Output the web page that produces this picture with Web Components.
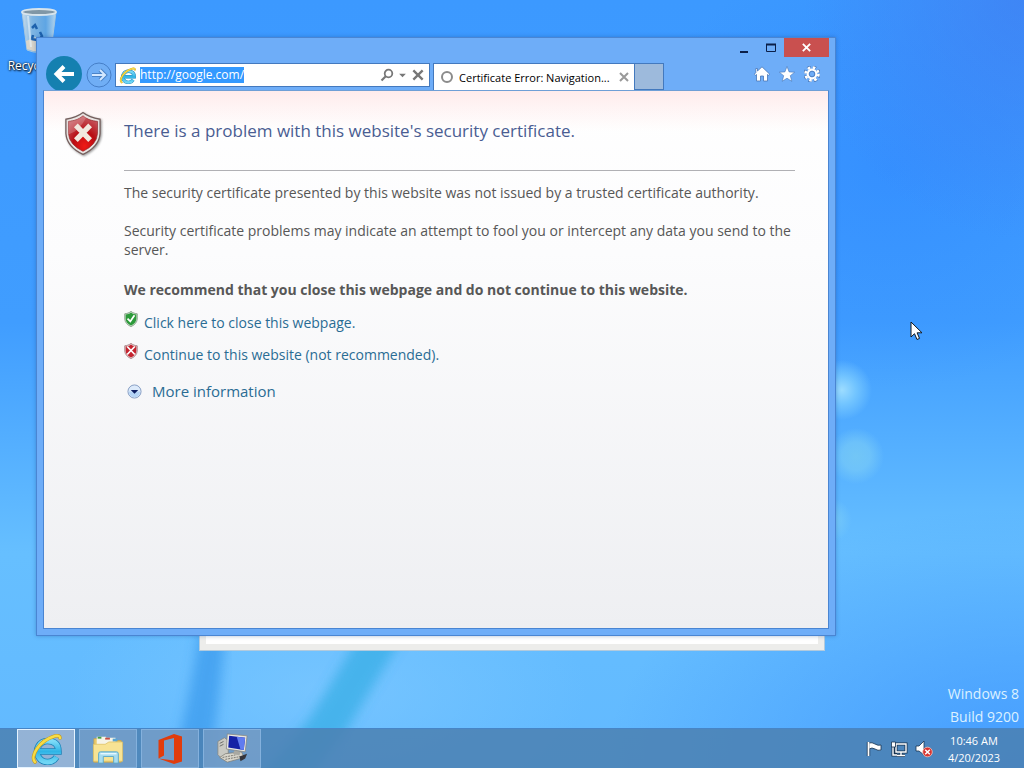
<!DOCTYPE html>
<html lang="en">
<head>
<meta charset="utf-8">
<title>Certificate Error: Navigation Blocked</title>
<style>
  html, body {
    margin: 0;
    height: 100%;
    overflow: hidden;
    font-family: "Open Sans", "Noto Sans", sans-serif;
    font-size: 12px;
  }
</style>
</head>
<body>
<desktop-screen>
  <desktop-icon slot="icons" name="bin" label="Recycle Bin"></desktop-icon>
  <back-window slot="windows"></back-window>
  <browser-window slot="windows" url="http://google.com/" tab="Certificate Error: Navigation...">
    <cert-error></cert-error>
  </browser-window>
  <task-bar slot="taskbar">
    <task-button icon="ie" label="Internet Explorer" active></task-button>
    <task-button icon="folder" label="File Explorer"></task-button>
    <task-button icon="office" label="Office"></task-button>
    <task-button icon="remote" label="Remote Desktop"></task-button>
    <tray-area slot="tray"></tray-area>
  </task-bar>
</desktop-screen>

<script>
const IE = `
  <defs>
    <linearGradient id="b" x1="0" y1="0" x2="0" y2="1"><stop offset="0" stop-color="#7fdcf8"/><stop offset=".5" stop-color="#2fb4e6"/><stop offset="1" stop-color="#6fd6f5"/></linearGradient>
  </defs>
  <path fill="none" stroke="#1d83b8" stroke-width="6.500" d="M8 18.500H28.500Q28.500 8 17.500 8A10.500 10.500 0 1 0 26.500 24"/>
  <path fill="none" stroke="url(#b)" stroke-width="5" d="M8 18.500H28.500Q28.500 8 17.500 8A10.500 10.500 0 1 0 26.500 24"/>
  <path fill="none" stroke="#c99c1c" stroke-width="3.600" stroke-linecap="round" d="M5 29C0 24 8 8 25 3Q30 2 30 5"/>
  <path fill="none" stroke="#f7dc45" stroke-width="2.400" stroke-linecap="round" d="M5 29C0 24 8 8 25 3Q30 2 30 5"/>`;

const SHIELD = 'M20 1C26 6 31 7 38 8V23Q37 37 20 45Q3 37 2 23V8C9 7 14 6 20 1Z';

const ICONS = {
  ie: ['0 0 32 32', IE],
  back: ['0 0 36 36', `<circle cx="18" cy="18" r="18" fill="#1580b0"/><path d="M28 18H11M18 10.500L10.500 18L18 25.500" fill="none" stroke="#fff" stroke-width="4"/>`],
  forward: ['0 0 26 26', `<circle cx="13" cy="13" r="12" fill="#70aef5" stroke="#467fc8"/><path d="M6 13H19M14 8L19 13L14 18" fill="none" stroke="#4a83c8" stroke-width="4"/><path d="M6 13H19M14 8L19 13L14 18" fill="none" stroke="#d4e8ff" stroke-width="2"/>`],
  search: ['0 0 14 14', `<circle cx="8.500" cy="5.500" r="3.800" fill="none" stroke="#777" stroke-width="1.800"/><path d="M6 8L1.500 12.500" stroke="#777" stroke-width="2.200"/>`],
  arrow: ['0 0 8 8', `<path d="M1 2.500H7L4 5.500Z" fill="#777"/>`],
  cross: ['0 0 12 12', `<path d="M2 2L10 10M10 2L2 10" stroke="currentColor" stroke-width="2"/>`],
  ring: ['0 0 14 14', `<circle cx="7" cy="7" r="5" fill="none" stroke="#8b8b8b" stroke-width="2"/>`],
  home: ['0 0 16 16', `<path d="M8 .8L3.500 5V2.500H1.800V6.700L.3 8.200L1.500 9.300L2.500 8.500V15H6.500V10H9.500V15H13.500V8.500L14.500 9.300L15.700 8.200Z" fill="#fff" stroke="#4775b5" stroke-width=".8"/>`],
  star: ['0 0 16 16', `<path d="M8 .5L10.100 5.900L15.700 6.200L11.300 9.700L12.800 15.300L8 12.200L3.200 15.300L4.700 9.700L.3 6.200L5.900 5.900Z" fill="#fff" stroke="#4775b5" stroke-width=".6"/>`],
  gear: ['0 0 16 16', `<circle cx="8" cy="8" r="6.500" fill="none" stroke="#4775b5" stroke-width="4" stroke-dasharray="3.100 2.005"/><circle cx="8" cy="8" r="6.500" fill="none" stroke="#fff" stroke-width="2.600" stroke-dasharray="2.600 2.505"/><circle cx="8" cy="8" r="4.300" fill="none" stroke="#fff" stroke-width="2.200"/><circle cx="8" cy="8" r="2.800" fill="none" stroke="#4775b5" stroke-width=".8"/>`],
  min: ['0 0 12 12', `<path d="M2 10H10" stroke="#0b1f49" stroke-width="2"/>`],
  max: ['0 0 12 12', `<path d="M1.500 2.500H10.500V9.500H1.500Z" fill="none" stroke="#0b1f49"/><path d="M1 2.500H11" stroke="#0b1f49" stroke-width="2"/>`],
  danger: ['0 0 40 46', `
    <defs><radialGradient id="r" cx=".55" cy=".85" r=".8"><stop offset="0" stop-color="#f01a16"/><stop offset=".5" stop-color="#b80d14"/><stop offset="1" stop-color="#c5545b"/></radialGradient></defs>
    <path d="${SHIELD}" fill="#e9e5e3" stroke="#75605e" stroke-width="1.400"/>
    <path d="${SHIELD}" fill="url(#r)" transform="translate(3 3.500) scale(.85)" stroke="#8d2024" stroke-width=".8"/>
    <path d="M4.500 24Q16 21 24 5L20 4.500Q12 10 4.500 10Z" fill="#fff" opacity=".2"/>
    <path d="M12.500 14.500L27.500 30M27.500 14.500L12.500 30" stroke="#f1e8df" stroke-width="5.500"/>`],
  blocked: ['0 0 40 46', `
    <path d="${SHIELD}" fill="#e6d4d6" stroke="#94686c" stroke-width="2"/>
    <path d="${SHIELD}" fill="#c4232f" transform="translate(3 3.500) scale(.85)"/>
    <path d="M9 10L31 33M31 10L9 33" stroke="#fff" stroke-width="5"/>`],
  safe: ['0 0 40 46', `
    <path d="${SHIELD}" fill="#cfe0cf" stroke="#6a8a6c" stroke-width="2"/>
    <path d="${SHIELD}" fill="#2c9a3a" transform="translate(3 3.500) scale(.85)"/>
    <path d="M10 22L18 30L30 12" fill="none" stroke="#fff" stroke-width="5"/>`],
  more: ['0 0 16 16', `<circle cx="8" cy="8" r="7" fill="#dceafb" stroke="#839bc1"/><path d="M2 8A6 6 0 0 0 14 8Z" fill="#b4d4f6"/><path d="M4 6.500H12L8 10.500Z" fill="#0d1f63"/>`],
  bin: ['0 0 40 46', `
    <defs><linearGradient id="g"><stop offset="0" stop-color="#c8dcea"/><stop offset=".3" stop-color="#7fb5e2"/><stop offset=".7" stop-color="#5ea5e4"/><stop offset="1" stop-color="#b6d6ee"/></linearGradient></defs>
    <path d="M3 5L8 43Q20 48 32 43L37 5Z" fill="url(#g)" stroke="#a5c7df"/>
    <path d="M7 34L17 30L29 35L32 42Q20 47 8 42Z" fill="#d9d5ca"/>
    <path d="M13 21L16 18L18 22M14 28L13 32L18 33M21 25L23 29L20 33" fill="none" stroke="#1e62ad" stroke-width="2.500"/>
    <path d="M9 9L12 40" stroke="#e8f4fc" stroke-width="2" opacity=".6"/>
    <ellipse cx="20" cy="5" rx="17" ry="3" fill="#8097a6" stroke="#d7e4ec" stroke-width="1.800"/>`],
  folder: ['0 0 34 34', `
    <path d="M2 6H10L12 8H31V31H2Z" fill="#e9c96a" stroke="#c5a14d" stroke-width=".8"/>
    <path d="M5 4H15V13H5ZM15 5H25V13H15Z" fill="#f6f4e7"/>
    <path d="M6 4H10V6H6Z" fill="#45a046"/><path d="M14 5H19V7H14Z" fill="#c84e44"/><path d="M22 6H27V9H22Z" fill="#58a6d5"/>
    <path d="M1.500 12H14L18 9.500H32.500V30H1.500Z" fill="#f8e394" stroke="#dcbf62" stroke-width=".8"/>
    <path d="M7 32V22Q7 20 9 20H26Q28 20 28 22V32H23V25H12V32Z" fill="#a8dcef" stroke="#5ba9ca"/>
    <path d="M9 22H26" stroke="#e6f8ff" stroke-width="1.500"/>`],
  office: ['0 0 32 32', `<path d="M4.500 7L20 1L28 3.500V28.500L20 31L4.500 25.500L20 27.500V5L10 7.500V22.500L4.500 25.500Z" fill="#e13c0c"/>`],
  remote: ['0 0 34 34', `
    <path d="M2 9L9 5L13 8V23L6 27L2 23Z" fill="#c9c9c3" stroke="#85857f" stroke-width=".8"/>
    <path d="M4 11L8 9M4 14L8 12" stroke="#6a6a66"/>
    <path d="M10 22L27 20L30 26L12 31L4 26Z" fill="#d7d4ca" stroke="#7e7c75" stroke-width=".8"/>
    <path d="M7 26L22 23M10 28L26 25" stroke="#77756e" stroke-dasharray="2 1"/>
    <path d="M20 18L26 20L25 24L18 22Z" fill="#a8a8a2"/>
    <path d="M12 1L33 3L31 20L11 17Z" fill="#e8e8e3" stroke="#868680" stroke-width=".8"/>
    <path d="M14 3L31 5L29.500 18L13 15.500Z" fill="#1522a5"/>
    <path d="M22 4L31 5L29.500 18L26 17.500Z" fill="#607cf0"/>
    <path d="M25 25L33 22L31 27L26 30Z" fill="#34343a"/>`],
  flag: ['0 0 18 18', `<path d="M3.500 2V16" stroke="#183451" stroke-width="3.400"/><path d="M4 3Q7 2 10 4T16 5V10Q13 11 10 9T4 9Z" fill="#fff" stroke="#183451" stroke-width=".8"/><path d="M3.500 2V16" stroke="#fff" stroke-width="1.800"/>`],
  network: ['0 0 18 18', `<path d="M6 4H16V12H6ZM11 12V15M7 15.500H15M3 6V15H7" fill="none" stroke="#183451" stroke-width="3"/><path d="M6 4H16V12H6ZM11 12V15M7 15.500H15M3 6V15H7" fill="none" stroke="#fff" stroke-width="1.400"/><path d="M1.500 2H5.500V7H1.500Z" fill="#fff" stroke="#183451" stroke-width=".8"/>`],
  sound: ['0 0 18 18', `<path d="M1 6H4L9 1V15L4 11H1Z" fill="#fff" stroke="#183451" stroke-width=".8"/><circle cx="12.500" cy="12" r="4.800" fill="#d8332f" stroke="#f2c5bd" stroke-width=".8"/><path d="M10.200 9.700L14.800 14.300M14.800 9.700L10.200 14.300" stroke="#fff" stroke-width="1.500"/>`],
  pointer: ['0 0 13 20', `<path d="M1 1V16L4.500 12.700L7 18.500L9.500 17.400L7.100 11.800H12Z" fill="#fff" stroke="#101820"/>`]
};

function svg(name, width, height) {
  const [box, body] = ICONS[name];
  return `<svg viewBox="${box}" width="${width}" height="${height || width}" aria-hidden="true">${body}</svg>`;
}

class DesktopScreen extends HTMLElement {
  constructor() {
    super();
    this.attachShadow({ mode: 'open' });
  }

  connectedCallback() {
    this.shadowRoot.innerHTML = `
    <style>
      :host{
        display: flex;
        flex-direction: column;
        position: relative;
        height: 100%;
        overflow: hidden;
        background:
          radial-gradient(circle at 842px 390px, rgba(165, 226, 255, .9) 0, rgba(140, 216, 255, .6) 14px, transparent 30px),
          radial-gradient(circle at 856px 456px, rgba(133, 212, 240, .6) 0, rgba(133, 212, 245, .5) 14px, transparent 28px),
          radial-gradient(circle at 830px 520px, rgba(133, 212, 245, .7) 0, transparent 22px),
          radial-gradient(ellipse 220px 240px at 100% 0, rgba(66, 116, 236, .5), transparent),
          radial-gradient(ellipse 260px 220px at 87% 22%, rgba(40, 128, 255, .4), transparent),
          radial-gradient(ellipse 420px 260px at 100% 100%, rgba(48, 136, 255, .6), transparent),
          radial-gradient(ellipse 260px 120px at 32% 90%, rgba(130, 203, 255, .6), transparent),
          linear-gradient(#3c99ff 0, #409dff 42%, #66bfff 72%, #62b9ff 100%);
      }
      .streaks{
        position: absolute;
        left: 0;
        bottom: 0;
        pointer-events: none;
      }
      .space{
        flex: 1;
        display: flex;
        flex-direction: column;
        justify-content: space-between;
      }
      .build{
        align-self: flex-end;
        padding-right: 5px;
        text-align: right;
        font-size: 14px;
        line-height: 23px;
        color: #dcf1ff;
      }
      .pointer{
        position: absolute;
        left: 910px;
        top: 321px;
        z-index: 9;
      }
      svg{
        display: block;
      }
    </style>
    <svg class="streaks" width="480" height="200" aria-hidden="true">
      <defs><filter id="soft"><feGaussianBlur stdDeviation="6"/></filter></defs>
      <path d="M200 60H226Q220 130 210 200H172Q190 130 200 60Z" fill="#3899ec" opacity=".7" filter="url(#soft)"/>
      <path d="M358 70H402L345 165L310 210H260L310 150Z" fill="#38aee6" opacity=".75" filter="url(#soft)"/>
    </svg>
    <div class="space">
      <slot name="icons"></slot>
      <div class="build">Windows 8<br>Build 9200</div>
    </div>
    <slot name="windows"></slot>
    <slot name="taskbar"></slot>
    <div class="pointer">${svg('pointer', 13, 20)}</div>
    `;
  }
}

customElements.define('desktop-screen', DesktopScreen);


class DesktopIcon extends HTMLElement {
  constructor() {
    super();
    this.attachShadow({ mode: 'open' });
  }

  connectedCallback() {
    this.shadowRoot.innerHTML = `
    <style>
      :host{
        display: flex;
        flex-direction: column;
        align-items: center;
        width: 78px;
        padding-top: 7px;
        gap: 5px;
        color: #fff;
        line-height: 16px;
        text-shadow: 1px 1px 2px #000, 0 0 2px #000;
        white-space: nowrap;
      }
    </style>
    ${svg(this.getAttribute('name'), 40, 46)}
    <span>${this.getAttribute('label')}</span>
    `;
  }
}

customElements.define('desktop-icon', DesktopIcon);


class BackWindow extends HTMLElement {
  constructor() {
    super();
    this.attachShadow({ mode: 'open' });
  }

  connectedCallback() {
    this.shadowRoot.innerHTML = `
    <style>
      :host{
        display: block;
        position: absolute;
        box-sizing: border-box;
        inset: 120px 199px 117px 199px;
        border: 7px solid #ededeb;
        outline: 1px solid rgba(90, 150, 200, .4);
        outline-offset: -1px;
        background: #fff;
      }
    </style>
    `;
  }
}

customElements.define('back-window', BackWindow);


class BrowserWindow extends HTMLElement {
  constructor() {
    super();
    this.attachShadow({ mode: 'open' });
  }

  connectedCallback() {
    this.shadowRoot.innerHTML = `
    <style>
      :host{
        display: flex;
        flex-direction: column;
        position: absolute;
        inset: 37px 188px 132px 36px;
        box-sizing: border-box;
        border: 1px solid #4a85d2;
        padding: 0 6px 6px;
        background: #6eadf8;
        box-shadow: 0 0 4px rgba(20, 60, 130, .35);
      }
      button{
        display: flex;
        align-items: center;
        justify-content: center;
        padding: 0;
        border: none;
        background: transparent;
        color: #777;
      }
      svg{
        display: block;
      }
      .caption{
        display: flex;
        justify-content: flex-end;
        height: 19px;
      }
      .caption button{
        width: 27px;
      }
      .caption .close{
        width: 45px;
        background: #c9504f;
        color: #fff;
      }
      .bar{
        display: flex;
        align-items: flex-end;
        height: 33px;
      }
      .back{
        align-self: flex-start;
        height: 34px;
        margin-left: 3px;
        overflow: visible;
      }
      .forward{
        margin: 0 3px 2px 4px;
      }
      .address{
        flex: 322 1 0;
        display: flex;
        align-items: center;
        box-sizing: border-box;
        height: 24px;
        margin-bottom: 3px;
        padding: 0 4px 0 3px;
        gap: 4px;
        border: 1px solid #4379be;
        background: #fff;
      }
      .address input{
        flex: 1;
        min-width: 0;
        padding: 0;
        border: none;
        outline: none;
        background: transparent;
        font-family: inherit;
        font-size: 12px;
        line-height: 16px;
        color: #000;
      }
      .address input::selection{
        background: #3399ff;
        color: #fff;
      }
      .tab{
        flex: 200 1 0;
        display: flex;
        align-items: center;
        box-sizing: border-box;
        height: 27px;
        margin-left: 3px;
        padding: 0 4px 0 6px;
        gap: 5px;
        border: 1px solid #4379be;
        border-bottom: none;
        background: #fff;
        color: #000;
        font-size: 11px;
        white-space: nowrap;
      }
      .tab span{
        flex: 1;
        min-width: 0;
      }
      .tab button{
        color: #999;
      }
      .new{
        box-sizing: border-box;
        width: 29px;
        height: 27px;
        border: 1px solid #4379be;
        border-left: none;
        background: #9dbadc;
      }
      .tools{
        flex: 164 1 0;
        box-sizing: border-box;
        display: flex;
        justify-content: flex-end;
        gap: 9px;
        padding: 0 9px 8px 0;
      }
      .page{
        flex: 1;
        min-height: 0;
        border: 1px solid #4a85d2;
        border-top-color: #6f9fd6;
        z-index: 1;
      }
    </style>
    <div class="caption">
      <button aria-label="Minimize">${svg('min', 12)}</button>
      <button aria-label="Maximize">${svg('max', 12)}</button>
      <button class="close" aria-label="Close">${svg('cross', 11)}</button>
    </div>
    <div class="bar">
      <button class="back" aria-label="Back">${svg('back', 36)}</button>
      <button class="forward" aria-label="Forward">${svg('forward', 26)}</button>
      <div class="address">
        ${svg('ie', 17)}
        <input type="text" value="${this.getAttribute('url')}" aria-label="Address" spellcheck="false">
        <button aria-label="Search">${svg('search', 14)}</button>
        <button aria-label="Show address list">${svg('arrow', 9)}</button>
        <button aria-label="Stop">${svg('cross', 14)}</button>
      </div>
      <div class="tab">
        ${svg('ring', 14)}
        <span>${this.getAttribute('tab')}</span>
        <button aria-label="Close tab">${svg('cross', 12)}</button>
      </div>
      <button class="new" aria-label="New tab"></button>
      <div class="tools">
        <button aria-label="Home">${svg('home', 16)}</button>
        <button aria-label="Favorites">${svg('star', 16)}</button>
        <button aria-label="Tools">${svg('gear', 16)}</button>
      </div>
    </div>
    <div class="page"><slot></slot></div>
    `;

    const address = this.shadowRoot.querySelector('input');
    address.focus();
    address.select();
  }
}

customElements.define('browser-window', BrowserWindow);


class CertError extends HTMLElement {
  constructor() {
    super();
    this.attachShadow({ mode: 'open' });
  }

  connectedCallback() {
    this.shadowRoot.innerHTML = `
    <style>
      :host{
        display: grid;
        grid-template-columns: 38px 1fr;
        align-content: start;
        column-gap: 22px;
        box-sizing: border-box;
        height: 100%;
        padding: 20px 33px 20px 20px;
        background:
          linear-gradient(#ffecec, rgba(255, 255, 255, 0) 40px),
          linear-gradient(#fff, #fcfcfd 30%, #eeeff2);
        color: #575757;
        font-size: 14px;
        line-height: 19px;
      }
      h1{
        margin: 0;
        padding: 7px 0 27px;
        border-bottom: 1px solid #b0b0b4;
        font-size: 17px;
        font-weight: 400;
        line-height: 25px;
        color: #4a5d92;
      }
      .shield{
        filter: drop-shadow(1px 1px 1px rgba(0, 0, 0, .4));
      }
      .body{
        grid-column: 2;
        padding-top: 12px;
      }
      p{
        margin: 0 0 19px;
      }
      .advice{
        margin: 21px 0 12px;
        font-weight: 700;
      }
      .choice{
        display: flex;
        gap: 6px;
        margin-bottom: 11px;
      }
      .choice a{
        padding-top: 2px;
      }
      .more{
        display: flex;
        align-items: center;
        gap: 10px;
        margin: 15px 0 0 3px;
        font-size: 15px;
        line-height: 24px;
      }
      a{
        color: #2a6c94;
        text-decoration: none;
      }
      svg{
        display: block;
      }
    </style>
    <div class="shield">${svg('danger', 38, 45)}</div>
    <h1>There is a problem with this website's security certificate.</h1>
    <div class="body">
      <p>The security certificate presented by this website was not issued by a trusted certificate authority.</p>
      <p>Security certificate problems may indicate an attempt to fool you or intercept any data you send to the server.</p>
      <p class="advice">We recommend that you close this webpage and do not continue to this website.</p>
      <div class="choice">${svg('safe', 14, 16)}<a href="#close">Click here to close this webpage.</a></div>
      <div class="choice">${svg('blocked', 14, 16)}<a href="#continue">Continue to this website (not recommended).</a></div>
      <div class="more">${svg('more', 15)}<a href="#more">More information</a></div>
    </div>
    `;
  }
}

customElements.define('cert-error', CertError);


class TaskBar extends HTMLElement {
  constructor() {
    super();
    this.attachShadow({ mode: 'open' });
  }

  connectedCallback() {
    this.shadowRoot.innerHTML = `
    <style>
      :host{
        display: flex;
        position: relative;
        box-sizing: border-box;
        height: 40px;
        padding: 0 0 0 17px;
        border-top: 1px solid #4785c6;
        background: rgba(75, 128, 178, .85);
      }
      .buttons{
        flex: 1;
        display: flex;
        gap: 4px;
      }
    </style>
    <div class="buttons"><slot></slot></div>
    <slot name="tray"></slot>
    `;
  }
}

customElements.define('task-bar', TaskBar);


class TaskButton extends HTMLElement {
  constructor() {
    super();
    this.attachShadow({ mode: 'open' });
  }

  connectedCallback() {
    this.shadowRoot.innerHTML = `
    <style>
      :host{
        display: flex;
        width: 58px;
      }
      button{
        flex: 1;
        display: flex;
        align-items: center;
        justify-content: center;
        padding: 0;
        border: 1px solid #84b1dd;
        background: rgba(150, 180, 215, .45);
      }
      :host([active]) button{
        border-color: #e4f3ff;
        background: rgba(165, 190, 220, .8);
      }
    </style>
    <button aria-label="${this.getAttribute('label')}">${svg(this.getAttribute('icon'), 32)}</button>
    `;
  }
}

customElements.define('task-button', TaskButton);


class TrayArea extends HTMLElement {
  constructor() {
    super();
    this.attachShadow({ mode: 'open' });
  }

  connectedCallback() {
    this.shadowRoot.innerHTML = `
    <style>
      :host{
        display: flex;
        align-items: center;
        gap: 7px;
        color: #fff;
      }
      button{
        display: flex;
        padding: 0;
        border: none;
        background: transparent;
      }
      time{
        width: 68px;
        margin-right: 16px;
        text-align: center;
        font-size: 11px;
        line-height: 17px;
      }
    </style>
    <button aria-label="Action Center">${svg('flag', 18)}</button>
    <button aria-label="Network">${svg('network', 18)}</button>
    <button aria-label="Volume">${svg('sound', 18)}</button>
    <time datetime="2023-04-20T10:46">10:46 AM<br>4/20/2023</time>
    `;
  }
}

customElements.define('tray-area', TrayArea);
</script>
</body>
</html>
